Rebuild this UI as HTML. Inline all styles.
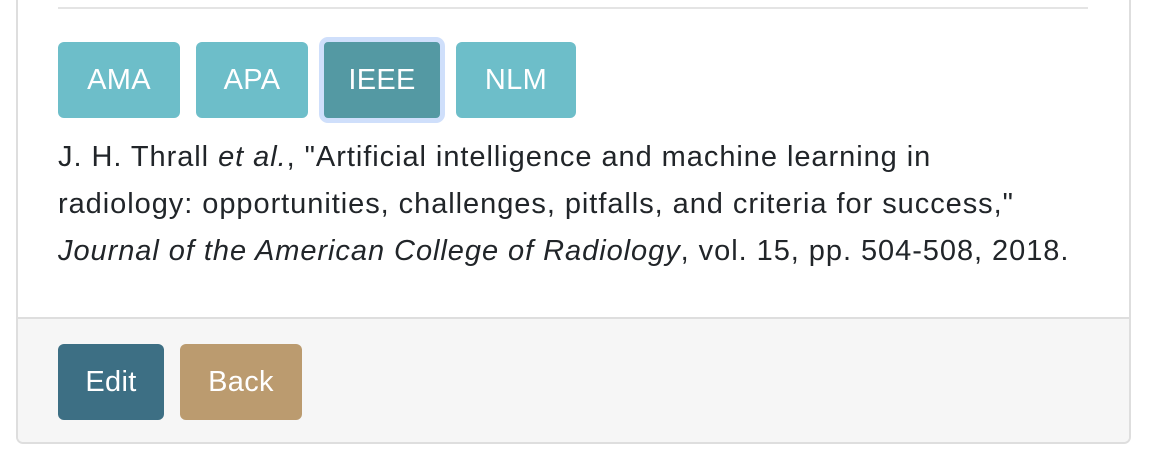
<!DOCTYPE html>
<html><head><style>
body{margin:0;width:1150px;height:464px;background:#fff;font-family:"Liberation Sans",Arial,sans-serif;position:relative;overflow:hidden}
.card{position:absolute;left:16px;top:-10px;width:1111px;height:452px;border:2px solid #dedede;border-top:none;border-radius:0 0 7px 7px;overflow:hidden}
.hr{position:absolute;left:40px;top:17px;width:1030px;height:2px;background:#e4e4e4}
.btn{position:absolute;height:76px;line-height:76px;color:#fff;font-size:29px;letter-spacing:0.3px;text-align:center;border-radius:6px}
.cite{position:absolute;left:40px;top:144px;white-space:nowrap;font-size:29px;letter-spacing:0.95px;line-height:47px;color:#212529}
.foot{position:absolute;left:0;top:327px;width:100%;height:130px;background:#f6f6f6;border-top:2px solid #dedede}
</style></head><body>
<div class="card">
<div class="hr"></div>
<div class="btn" style="left:40px;top:52px;width:122px;background:#6dbec9">AMA</div>
<div class="btn" style="left:178px;top:52px;width:112px;background:#6dbec9">APA</div>
<div class="btn" style="left:301px;top:47px;width:116px;background:#5499a3;border:5px solid #cfdffb;border-radius:9px">IEEE</div>
<div class="btn" style="left:438px;top:52px;width:120px;background:#6dbec9">NLM</div>
<div class="cite">J. H. Thrall <i>et al.</i>, "Artificial intelligence and machine learning in<br>radiology: opportunities, challenges, pitfalls, and criteria for success,"<br><i>Journal of the American College of Radiology</i>, vol. 15, pp. 504-508, 2018.</div>
<div class="foot">
<div class="btn" style="left:40px;top:25px;width:106px;background:#3d6f84">Edit</div>
<div class="btn" style="left:162px;top:25px;width:122px;background:#bb9b6f">Back</div>
</div>
</div>
</body></html>
